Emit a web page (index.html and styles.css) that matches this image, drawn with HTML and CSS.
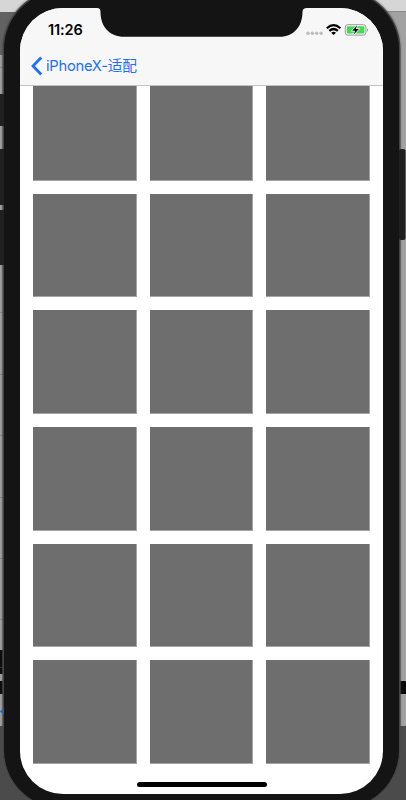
FILE: index.html
```html
<!DOCTYPE html>
<html lang="zh">
<head>
<meta charset="utf-8">
<title>iPhoneX-适配</title>
<link rel="stylesheet" href="styles.css">
</head>
<body>
<div class="desktop">
  <svg class="backdrop" width="406" height="800" viewBox="0 0 406 800" aria-hidden="true">
    <rect width="406" height="800" fill="#a2a2a2"/>
    <rect width="406" height="12" fill="#d6d6d6"/>
    <rect y="12" width="30" height="43" fill="#626262"/>
    <rect x="376" y="11" width="30" height="1" fill="#888"/>
    <path d="M0 67.500H5M0 312.500H5M0 374.500H5M0 435.500H5M0 497.500H5M0 558.500H5M0 619.500H5" stroke="#858585"/>
    <path d="M0 650H10V674H0ZM0 681H10V694H0ZM396 681H406V694H396Z" fill="#080808"/>
    <path d="M0 667.500H5" stroke="#333"/>
    <rect y="726" width="406" height="74" fill="#4b4b4b"/>
  </svg>
  <main class="phone">
    <div class="screen">
      <header class="bar">
        <div class="status">
          <span class="time">11:26</span>
          <svg class="indicators" width="64" height="14" viewBox="0 0 64 14" aria-hidden="true">
            <g fill="#bdbdbd"><circle cx="1.900" cy="10.200" r="1.700"/><circle cx="6.300" cy="10.200" r="1.700"/><circle cx="10.700" cy="10.200" r="1.700"/><circle cx="15.100" cy="10.200" r="1.700"/></g>
            <g fill="none" stroke="#000" stroke-width="2.200"><path d="M20.800 5.300Q27.600-1 34.400 5.300"/><path d="M23.300 7.900Q27.600 4.100 31.900 7.900"/></g>
            <path d="M25.200 9.700Q27.600 7.900 30 9.700L27.600 12.100Z"/>
            <rect x="39.300" y="1.700" width="20.600" height="10.400" rx="2.400" fill="#f8f8f8" stroke="#999"/>
            <rect x="40.800" y="3.200" width="17.600" height="7.400" rx="1" fill="#3fdc53"/>
            <path d="M61 5.200Q62.800 7 61 8.700Z" fill="#666"/>
            <path d="M51.100 2.200L46.200 7.700H49.100L47.800 11.600L52.800 6.100H49.900Z" stroke="#f8f8f8" stroke-width="1.500" paint-order="stroke"/>
          </svg>
        </div>
        <nav class="nav">
          <svg width="12" height="20" viewBox="0 0 12 20" aria-hidden="true"><path d="M10.200 1.500L2 10L10.200 18.500" fill="none" stroke="#1b70ff" stroke-width="2.800"/></svg>
          <span class="title">iPhoneX-适配</span>
        </nav>
      </header>
      <section class="grid">
        <i></i><i></i><i></i><i></i><i></i><i></i><i></i><i></i><i></i>
        <i></i><i></i><i></i><i></i><i></i><i></i><i></i><i></i><i></i>
      </section>
      <svg class="notch" width="210" height="30" viewBox="97 8 210 30" aria-hidden="true"><path d="M97 8C99.500 8 100.500 9 100.500 12C100.500 27 110 36.800 124 36.800H280C293 36.800 302.500 27 302.500 12C302.500 9 304 8 307 8Z" fill="#141414"/></svg>
      <div class="home"></div>
    </div>
  </main>
  <svg class="backdrop" width="406" height="800" viewBox="0 0 406 800" aria-hidden="true">
    <path d="M0 94H4V126H0ZM0 149H4V205H0ZM0 210H4V265H0Z" fill="#202020"/>
    <path d="M4 707.500L0 711.500L4 715" fill="#2465b5"/>
    <rect x="399" y="149" width="6.500" height="91" rx="2" fill="#202020"/>
  </svg>
</div>
</body>
</html>
```

FILE: styles.css
```css
html, body { margin: 0; overflow: hidden; }
.desktop { position: relative; width: 406px; height: 800px; overflow: hidden; }
.backdrop { position: absolute; inset: 0; }
.phone {
  position: relative;
  box-sizing: border-box;
  width: 395px;
  height: 817px;
  margin: -9px 0 0 4px;
  padding: 17px 16px;
  border-radius: 58px;
  background: #141414;
  box-shadow: 0 0 0 1.500px #444, 0 0 2px 2px #5558;
}
.screen {
  position: relative;
  display: flex;
  flex-direction: column;
  width: 363px;
  height: 786px;
  overflow: hidden;
  border-radius: 43px;
  background: #fff;
}
.bar {
  position: relative;
  z-index: 1;
  box-sizing: border-box;
  flex: none;
  height: 78px;
  border-bottom: 1px solid #c4c4c4;
  background: #f7f7f7;
}
.status {
  display: flex;
  align-items: center;
  justify-content: space-between;
  height: 43px;
  padding: 0 13px 0 28px;
}
.time { font: 600 14.5px/20px Inter, sans-serif; color: #000; letter-spacing: -.1px; }
.indicators { display: block; }
.nav {
  display: flex;
  align-items: center;
  gap: 3px;
  height: 30px;
  padding-left: 11px;
  color: #1b70ff;
}
.title { font: 400 14.7px/20px Inter, "Noto Sans CJK SC", sans-serif; letter-spacing: -.23px; white-space: nowrap; }
.grid {
  display: grid;
  grid-template-columns: repeat(3, 103.600px);
  grid-auto-rows: 103.600px;
  gap: 13.060px;
  margin: -8.850px 0 0 13.100px;
}
.grid i {
  box-sizing: border-box;
  border: solid #a4a4a4;
  border-width: 0 1px 1px 0;
  background: #6e6e6e;
}
.notch { position: absolute; z-index: 2; top: 0; left: 77px; }
.home { position: absolute; left: 116.500px; bottom: 7px; width: 130px; height: 4.700px; border-radius: 3px; background: #000; }
```
